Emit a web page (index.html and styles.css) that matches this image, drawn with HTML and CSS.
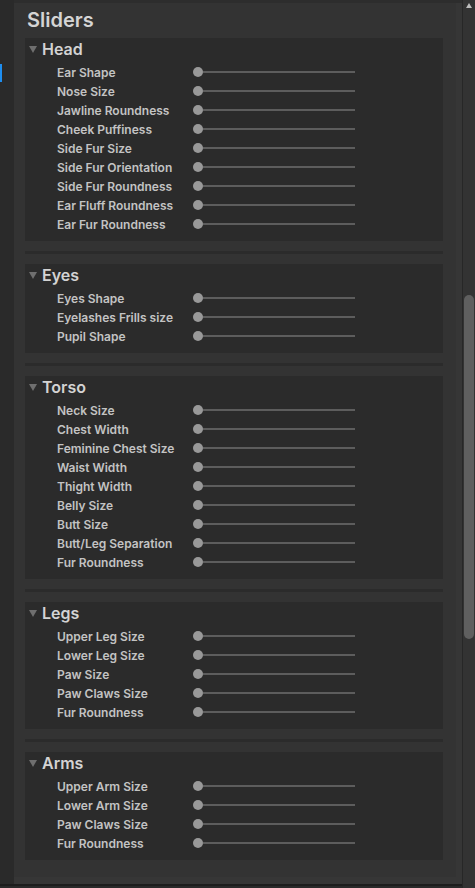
FILE: index.html
```html
<!DOCTYPE html>
<html>
<head>
<meta charset="utf-8">
<link rel="stylesheet" href="styles.css">
</head>
<body>
<div class="app">
  <div class="main">
    <div class="body-row">
      <div class="gutter"><div class="marker"></div></div>
      <div class="content">
        <div class="panel">
          <div class="title">Sliders</div>

          <div class="section">
            <div class="header"><svg class="caret" width="8" height="7" viewBox="0 0 8 7"><polygon points="0,0 8,0 4,7"/></svg>Head</div>
            <div class="row"><span class="label">Ear Shape</span><span class="slider"><span class="knob"></span><span class="track"></span></span></div>
            <div class="row"><span class="label">Nose Size</span><span class="slider"><span class="knob"></span><span class="track"></span></span></div>
            <div class="row"><span class="label">Jawline Roundness</span><span class="slider"><span class="knob"></span><span class="track"></span></span></div>
            <div class="row"><span class="label">Cheek Puffiness</span><span class="slider"><span class="knob"></span><span class="track"></span></span></div>
            <div class="row"><span class="label">Side Fur Size</span><span class="slider"><span class="knob"></span><span class="track"></span></span></div>
            <div class="row"><span class="label">Side Fur Orientation</span><span class="slider"><span class="knob"></span><span class="track"></span></span></div>
            <div class="row"><span class="label">Side Fur Roundness</span><span class="slider"><span class="knob"></span><span class="track"></span></span></div>
            <div class="row"><span class="label">Ear Fluff Roundness</span><span class="slider"><span class="knob"></span><span class="track"></span></span></div>
            <div class="row"><span class="label">Ear Fur Roundness</span><span class="slider"><span class="knob"></span><span class="track"></span></span></div>
          </div>
          <div class="sep"></div>

          <div class="section">
            <div class="header"><svg class="caret" width="8" height="7" viewBox="0 0 8 7"><polygon points="0,0 8,0 4,7"/></svg>Eyes</div>
            <div class="row"><span class="label">Eyes Shape</span><span class="slider"><span class="knob"></span><span class="track"></span></span></div>
            <div class="row"><span class="label">Eyelashes Frills size</span><span class="slider"><span class="knob"></span><span class="track"></span></span></div>
            <div class="row"><span class="label">Pupil Shape</span><span class="slider"><span class="knob"></span><span class="track"></span></span></div>
          </div>
          <div class="sep"></div>

          <div class="section">
            <div class="header"><svg class="caret" width="8" height="7" viewBox="0 0 8 7"><polygon points="0,0 8,0 4,7"/></svg>Torso</div>
            <div class="row"><span class="label">Neck Size</span><span class="slider"><span class="knob"></span><span class="track"></span></span></div>
            <div class="row"><span class="label">Chest Width</span><span class="slider"><span class="knob"></span><span class="track"></span></span></div>
            <div class="row"><span class="label">Feminine Chest Size</span><span class="slider"><span class="knob"></span><span class="track"></span></span></div>
            <div class="row"><span class="label">Waist Width</span><span class="slider"><span class="knob"></span><span class="track"></span></span></div>
            <div class="row"><span class="label">Thight Width</span><span class="slider"><span class="knob"></span><span class="track"></span></span></div>
            <div class="row"><span class="label">Belly Size</span><span class="slider"><span class="knob"></span><span class="track"></span></span></div>
            <div class="row"><span class="label">Butt Size</span><span class="slider"><span class="knob"></span><span class="track"></span></span></div>
            <div class="row"><span class="label">Butt/Leg Separation</span><span class="slider"><span class="knob"></span><span class="track"></span></span></div>
            <div class="row"><span class="label">Fur Roundness</span><span class="slider"><span class="knob"></span><span class="track"></span></span></div>
          </div>
          <div class="sep"></div>

          <div class="section">
            <div class="header"><svg class="caret" width="8" height="7" viewBox="0 0 8 7"><polygon points="0,0 8,0 4,7"/></svg>Legs</div>
            <div class="row"><span class="label">Upper Leg Size</span><span class="slider"><span class="knob"></span><span class="track"></span></span></div>
            <div class="row"><span class="label">Lower Leg Size</span><span class="slider"><span class="knob"></span><span class="track"></span></span></div>
            <div class="row"><span class="label">Paw Size</span><span class="slider"><span class="knob"></span><span class="track"></span></span></div>
            <div class="row"><span class="label">Paw Claws Size</span><span class="slider"><span class="knob"></span><span class="track"></span></span></div>
            <div class="row"><span class="label">Fur Roundness</span><span class="slider"><span class="knob"></span><span class="track"></span></span></div>
          </div>
          <div class="sep"></div>

          <div class="section">
            <div class="header"><svg class="caret" width="8" height="7" viewBox="0 0 8 7"><polygon points="0,0 8,0 4,7"/></svg>Arms</div>
            <div class="row"><span class="label">Upper Arm Size</span><span class="slider"><span class="knob"></span><span class="track"></span></span></div>
            <div class="row"><span class="label">Lower Arm Size</span><span class="slider"><span class="knob"></span><span class="track"></span></span></div>
            <div class="row"><span class="label">Paw Claws Size</span><span class="slider"><span class="knob"></span><span class="track"></span></span></div>
            <div class="row"><span class="label">Fur Roundness</span><span class="slider"><span class="knob"></span><span class="track"></span></span></div>
          </div>
        </div>
      </div>
    </div>
    <div class="bottom-line"></div>
    <div class="bottom-strip"></div>
  </div>
  <div class="scrollbar">
    <div class="arrow"></div>
    <div class="thumb"></div>
  </div>
</div>
</body>
</html>
```
FILE: styles.css
```css
html, body {
  margin: 0;
  padding: 0;
  background: #2a2a2a;
  font-family: Inter, "Noto Sans", "Liberation Sans", sans-serif;
}
.app {
  display: flex;
  width: 475px;
  height: 888px;
  overflow: hidden;
}
.main {
  width: 462px;
  display: flex;
  flex-direction: column;
}
.body-row {
  display: flex;
  flex: 1;
}
.gutter {
  width: 14px;
  background: #2a2a2a;
  padding-top: 64px;
  box-sizing: border-box;
}
.marker {
  width: 2px;
  height: 18px;
  background: #1e8ef0;
}
.content {
  flex: 1;
  background: #363636;
  border-top: 3px solid #2d2d2d;
  padding-bottom: 7px;
}
.panel {
  width: 442px;
  height: 874px;
  background: #333333;
  box-sizing: border-box;
  padding: 4.5px 13px 0 11px;
  overflow: hidden;
}
.title {
  font-size: 20px;
  line-height: 24px;
  font-weight: 600;
  color: #d5d5d5;
  padding-left: 2px;
  margin-bottom: 6px;
}
.section {
  background: #2b2b2b;
  padding-bottom: 7px;
}
.header {
  display: flex;
  align-items: center;
  height: 23px;
  margin-bottom: 2px;
  font-size: 16px;
  line-height: 23px;
  font-weight: 600;
  color: #d3d3d3;
}
.caret {
  display: block;
  margin-left: 4px;
  margin-right: 5px;
  fill: #6f6f6f;
}
.row {
  display: flex;
  align-items: center;
  height: 19px;
  padding-left: 32px;
}
.label {
  width: 136px;
  font-size: 12px;
  line-height: 19px;
  font-weight: 600;
  color: #c3c3c3;
  white-space: nowrap;
}
.slider {
  display: flex;
  align-items: center;
}
.knob {
  width: 10px;
  height: 10px;
  border-radius: 50%;
  background: #999999;
}
.track {
  width: 152px;
  height: 2px;
  background: #5d5d5d;
}
.sep {
  height: 3px;
  margin: 10px 0 10px 0;
  background: #2b2b2b;
}
.bottom-line {
  height: 2px;
  background: #1d1d1d;
}
.bottom-strip {
  height: 2px;
  background: #2a2a2a;
}
.scrollbar {
  width: 13px;
  background: #333333;
  border-left: 1px solid #272727;
  box-sizing: border-box;
  display: flex;
  flex-direction: column;
  align-items: center;
}
.arrow {
  width: 0;
  height: 0;
  margin-top: 3px;
  border-left: 3.5px solid transparent;
  border-right: 3.5px solid transparent;
  border-bottom: 5px solid #bdbdbd;
}
.thumb {
  width: 10px;
  height: 344px;
  margin-top: 287px;
  border-radius: 5px;
  background: #5f5f5f;
}
```
